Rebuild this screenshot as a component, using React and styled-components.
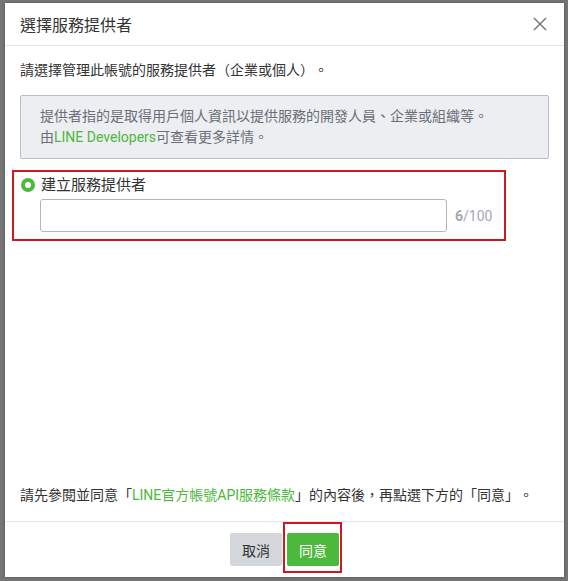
import styled, { createGlobalStyle } from "styled-components";

const Global = createGlobalStyle`
  html, body {
    margin: 0;
    padding: 0;
    background: #767676;
  }
  body {
    font-family: Roboto, "Noto Sans CJK TC", sans-serif;
    color: #333;
    text-spacing-trim: space-all;
  }
`;

const Screen = styled.div`
  width: 568px;
  height: 581px;
  padding: 3px 4px 4px 5px;
  box-sizing: border-box;
`;

const Modal = styled.div`
  width: 559px;
  height: 574px;
  background: #fff;
  box-shadow: 0 0 3px rgba(0, 0, 0, 0.35);
  display: flex;
  flex-direction: column;
`;

const Header = styled.div`
  height: 42px;
  border-bottom: 1px solid #e3e4e6;
  display: flex;
  align-items: center;
  justify-content: space-between;
  padding: 0 16px 0 15px;
`;

const Title = styled.h2`
  margin: 0;
  font-size: 16px;
  font-weight: 400;
  color: #333;
`;

const Close = styled.button`
  border: none;
  background: none;
  padding: 0;
  width: 16px;
  height: 16px;
  display: flex;
  cursor: pointer;
`;

const Body = styled.div`
  flex: 1;
  display: flex;
  flex-direction: column;
  padding: 14px 15px 16px;
`;

const Text = styled.p`
  margin: 0;
  font-size: 14px;
  line-height: 20px;
  color: #333;
`;

const Info = styled.div`
  margin-top: 15px;
  background: #eceef1;
  border: 1px solid #b9bdc8;
  border-radius: 2px;
  padding: 10px 19px;
  font-size: 14px;
  line-height: 21px;
  color: #6a6e78;
`;

const Link = styled.a`
  color: #4cb83c;
  text-decoration: none;
`;

const Highlight = styled.div`
  margin: 11px 0 0 -8px;
  width: 494px;
  box-sizing: border-box;
  border: 2px solid #cc1a20;
  padding: 3px 0 7px 7px;
`;

const RadioRow = styled.label`
  display: flex;
  align-items: center;
  font-size: 15px;
  line-height: 20px;
  color: #333;
`;

const Radio = styled.span`
  width: 14px;
  height: 14px;
  border-radius: 50%;
  background: #4cb83c;
  display: flex;
  align-items: center;
  justify-content: center;
  margin-right: 6px;
  &::after {
    content: "";
    width: 6px;
    height: 6px;
    border-radius: 50%;
    background: #fff;
  }
`;

const InputRow = styled.div`
  display: flex;
  align-items: center;
  margin: 4px 0 0 19px;
`;

const Input = styled.input`
  width: 407px;
  height: 33px;
  box-sizing: border-box;
  border: 1px solid #b2b6c4;
  border-radius: 3px;
  outline: none;
  padding: 0 8px;
  font-size: 14px;
`;

const Counter = styled.span`
  margin-left: 8px;
  font-size: 14px;
  color: #a3a7b0;
  b {
    font-weight: 700;
  }
`;

const Terms = styled(Text)`
  margin-top: auto;
`;

const Footer = styled.div`
  border-top: 1px solid #e6e7e9;
  padding: 11px 0;
  display: flex;
  justify-content: center;
  gap: 5px;
`;

const Button = styled.button`
  position: relative;
  height: 33px;
  padding: 0 12px;
  border: none;
  border-radius: 2px;
  font-family: inherit;
  font-size: 14px;
  background: ${(p) => (p.$primary ? "#4cb83c" : "#d4d7dc")};
  color: ${(p) => (p.$primary ? "#fff" : "#333")};
`;

const Mark = styled.span`
  position: absolute;
  top: -11px;
  bottom: -7px;
  left: -4px;
  right: -3px;
  border: 2px solid #cc1a20;
  pointer-events: none;
`;

export default function App() {
  return (
    <>
      <Global />
      <Screen>
        <Modal>
          <Header>
            <Title>選擇服務提供者</Title>
            <Close aria-label="close">
              <svg width="16" height="16" viewBox="0 0 16 16">
                <path d="M2 2L14 14M14 2L2 14" stroke="#7a7a7a" strokeWidth="1.5" />
              </svg>
            </Close>
          </Header>
          <Body>
            <Text>請選擇管理此帳號的服務提供者（企業或個人）。</Text>
            <Info>
              提供者指的是取得用戶個人資訊以提供服務的開發人員、企業或組織等。
              <br />
              由<Link href="#">LINE Developers</Link>可查看更多詳情。
            </Info>
            <Highlight>
              <RadioRow>
                <Radio />
                建立服務提供者
              </RadioRow>
              <InputRow>
                <Input />
                <Counter>
                  <b>6</b>/100
                </Counter>
              </InputRow>
            </Highlight>
            <Terms>
              請先參閱並同意「<Link href="#">LINE官方帳號API服務條款</Link>」的內容後，再點選下方的「同意」。
            </Terms>
          </Body>
          <Footer>
            <Button>取消</Button>
            <Button $primary>
              同意
              <Mark />
            </Button>
          </Footer>
        </Modal>
      </Screen>
    </>
  );
}
